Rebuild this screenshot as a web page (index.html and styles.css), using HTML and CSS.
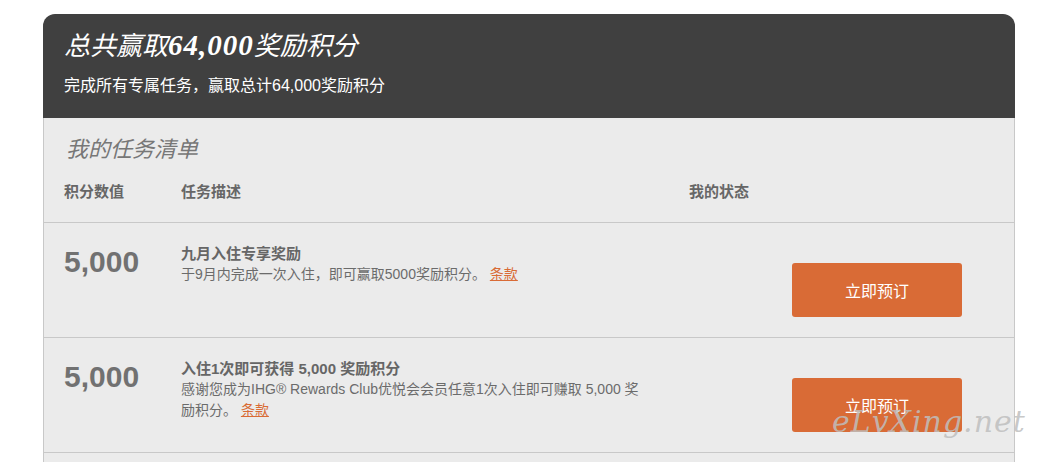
FILE: index.html
```html
<!DOCTYPE html>
<html lang="zh-CN">
<head>
  <meta charset="UTF-8">
  <meta name="viewport" content="width=device-width, initial-scale=1.0">
  <title>我的任务清单</title>
  <link rel="stylesheet" href="styles.css">
</head>
<body>

  <div class="card">
    <div class="card-header">
      <h1>总共赢取<span class="num">64,000</span>奖励积分</h1>
      <p>完成所有专属任务，赢取总计64,000奖励积分</p>
    </div>

    <div class="card-body">
      <h2>我的任务清单</h2>
      <div class="task-row task-head">
        <div>积分数值</div>
        <div>任务描述</div>
        <div>我的状态</div>
      </div>

      <div class="task-row">
        <div class="points">5,000</div>
        <div class="desc">
          <div class="desc-title">九月入住专享奖励</div>
          <div>于9月内完成一次入住，即可赢取5000奖励积分。 <a href="#">条款</a></div>
        </div>
        <div class="status"><button type="button" class="book-btn">立即预订</button></div>
      </div>

      <div class="task-row">
        <div class="points">5,000</div>
        <div class="desc">
          <div class="desc-title">入住1次即可获得 5,000 奖励积分</div>
          <div>感谢您成为IHG® Rewards Club优悦会会员任意1次入住即可赚取 5,000 奖励积分。 <a href="#">条款</a></div>
        </div>
        <div class="status"><button type="button" class="book-btn">立即预订</button></div>
      </div>
    </div>
  </div>

  <!-- watermark from the screenshot -->
  <div class="watermark">eLvXing.net</div>

</body>
</html>
```

FILE: styles.css
```css
body {
  margin: 0;
  padding: 0;
  background-color: #fff;
  font-family: "Liberation Sans", "Noto Sans CJK SC", sans-serif;
  color: #6b6b6b;
  overflow: hidden;
}

.card {
  width: 972px;
  margin: 14px 0 0 43px;
}

.card-header {
  background-color: #404040;
  color: #fff;
  border-radius: 12px 12px 0 0;
  padding: 17px 20px 21px 21px;
}

.card-header h1 {
  margin: 0;
  height: 32px;
  font-family: "Liberation Serif", "Noto Sans CJK SC", serif;
  font-style: italic;
  font-weight: normal;
  font-size: 26px;
  line-height: 32px;
}

.card-header h1 .num {
  font-weight: bold;
  font-size: 29px;
  line-height: 1;
  letter-spacing: 1px;
}

.card-header p {
  margin: 12px 0 0 0;
  font-size: 16px;
  line-height: 22px;
}

.card-body {
  background-color: #ebebeb;
  border-left: 1px solid #c8c8c8;
  border-right: 1px solid #c8c8c8;
  padding-top: 18px;
  min-height: 400px;
}

.card-body h2 {
  margin: 0 0 18px 0;
  padding-left: 22px;
  font-family: "Liberation Serif", "Noto Sans CJK SC", serif;
  font-style: italic;
  font-weight: normal;
  font-size: 22px;
  line-height: 28px;
  color: #777;
}

.task-row {
  display: grid;
  grid-template-columns: 79px 470px 1fr;
  column-gap: 38px;
  padding: 20px 52px 20px 20px;
  border-bottom: 1px solid #c8c8c8;
  font-size: 14px;
  line-height: 21px;
}

.task-head {
  padding-top: 0;
  font-size: 15px;
  line-height: 20px;
  font-weight: bold;
  color: #666;
}

.points {
  margin-top: 1px;
  font-size: 30px;
  line-height: 36px;
  font-weight: bold;
  color: #717171;
}

.desc-title {
  font-size: 15px;
  font-weight: bold;
  color: #666;
}

.desc a {
  color: #d96b36;
}

.status {
  display: flex;
  justify-content: flex-end;
}

.book-btn {
  margin-top: 20px;
  width: 170px;
  height: 54px;
  background-color: #d96b36;
  color: #fff;
  border: none;
  border-radius: 3px;
  font-family: "Liberation Sans", "Noto Sans CJK SC", sans-serif;
  font-size: 16px;
  cursor: pointer;
}

.watermark {
  position: absolute;
  left: 832px;
  top: 404px;
  font-family: "DejaVu Serif", serif;
  font-style: italic;
  font-size: 30px;
  letter-spacing: 1px;
  color: rgba(190, 190, 190, 0.85);
}
```
